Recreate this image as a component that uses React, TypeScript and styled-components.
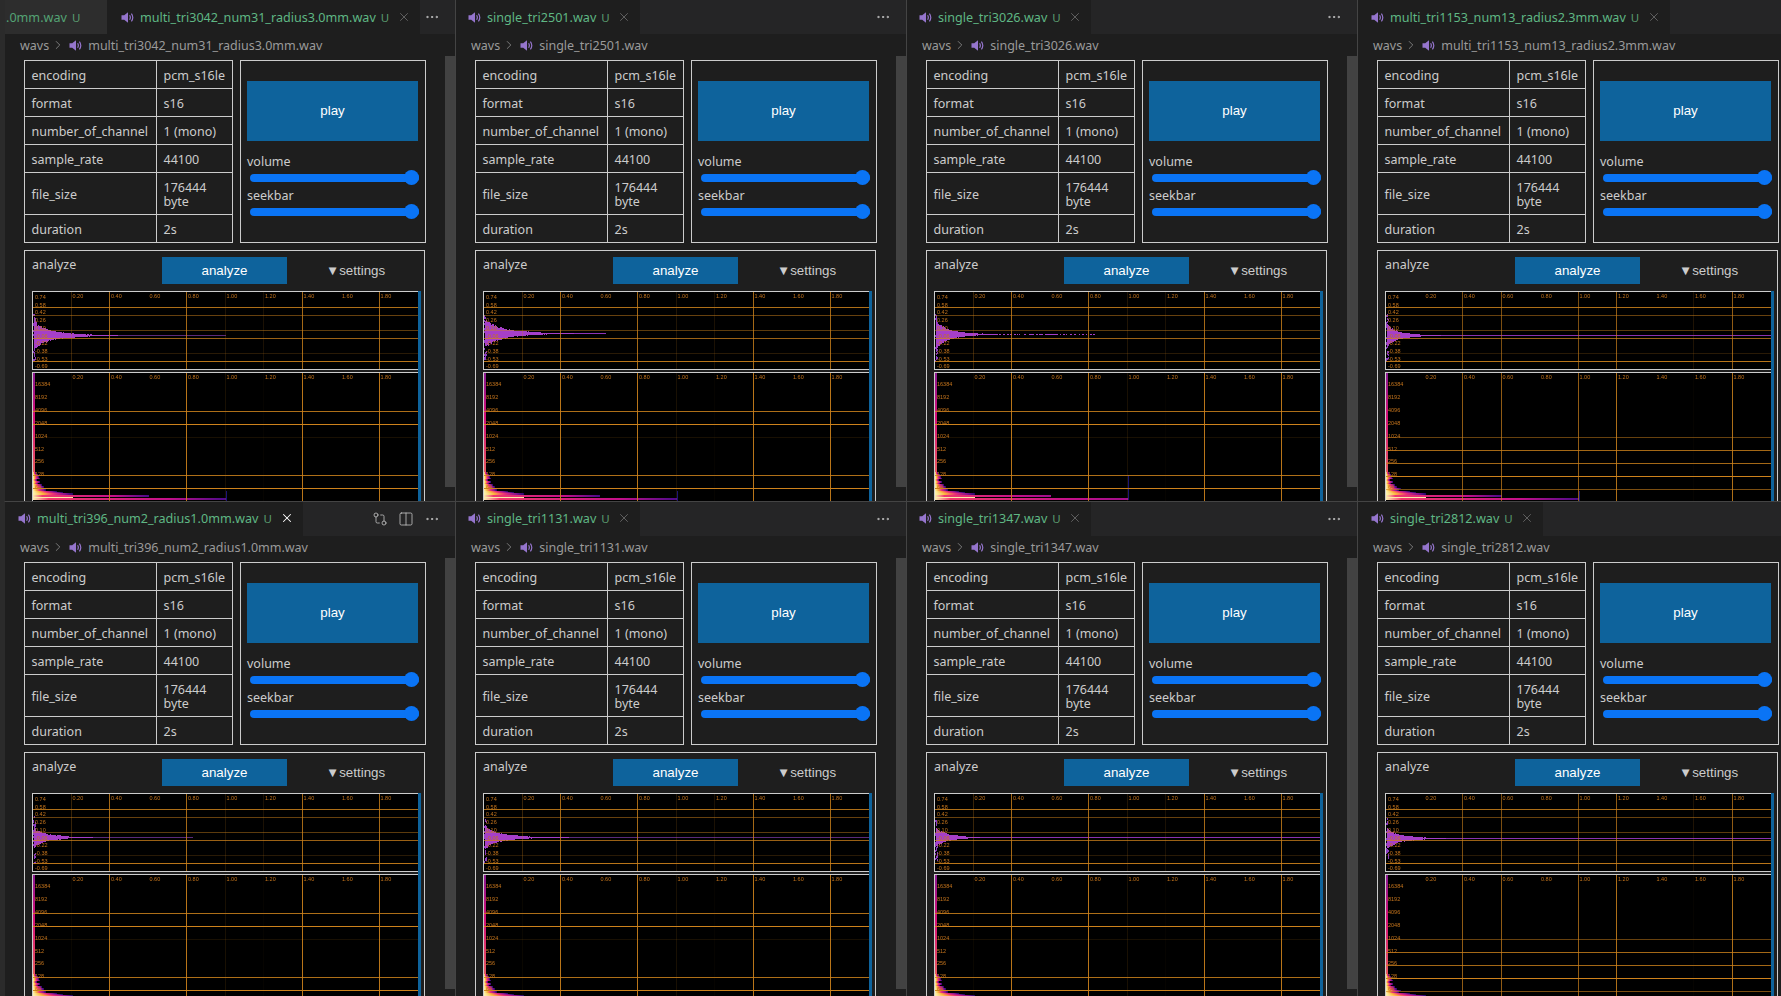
import styled, { createGlobalStyle } from 'styled-components'
import { ChevronRight, Columns2, Ellipsis, GitCompare, X } from 'lucide-react'

const GlobalStyle = createGlobalStyle`
  html, body {
    margin: 0;
    padding: 0;
    background: #1e1e1e;
    overflow: hidden;
  }
`

const UI_FONT = `"Noto Sans", "Open Sans", sans-serif`
const BUTTON_FONT = `"Liberation Sans", Arial, sans-serif`

const Workspace = styled.div`
  display: grid;
  grid-template-columns: 4px 451px 451px 451px 424px;
  grid-template-rows: 501px 495px;
  width: 1781px;
  height: 996px;
  overflow: hidden;
  font-family: ${UI_FONT};
  font-size: 12.5px;
  color: #cccccc;
`

const Gutter = styled.div`
  grid-row: 1 / 3;
  background: #2b2b2b;
`

const Pane = styled.section<{ $first: boolean; $bottom: boolean }>`
  position: relative;
  display: flex;
  flex-direction: column;
  overflow: hidden;
  background: #1e1e1e;
  border-left: 1px solid ${(p) => (p.$first ? '#2b2b2b' : '#444444')};
  border-top: ${(p) => (p.$bottom ? '1px solid #444444' : 'none')};
`

const TabStrip = styled.div`
  flex: none;
  display: flex;
  align-items: stretch;
  height: 34px;
  background: #252526;
  font-size: 12.6px;
  white-space: nowrap;
`

const Tab = styled.div<{ $padLeft: number; $raised: boolean }>`
  flex: none;
  display: flex;
  align-items: center;
  padding: 0 9px ${(p) => (p.$raised ? 2 : 0)}px ${(p) => p.$padLeft}px;
  background: #1e1e1e;
`

const LeadTab = styled.div`
  flex: none;
  display: flex;
  align-items: center;
  width: 101px;
  padding-left: 1px;
  background: #2d2d2d;
`

const TabName = styled.span`
  margin-left: 6px;
  color: #5fb784;
`

const LeadName = styled.span`
  color: #54a374;
`

const Untracked = styled.span`
  margin-left: 5px;
  width: 8px;
  font-size: 11.5px;
  color: #5a9c6f;
`

const CloseButton = styled.span<{ $strong: boolean }>`
  display: flex;
  margin-left: ${(p) => (p.$strong ? 9 : 8)}px;
  color: ${(p) => (p.$strong ? '#ffffff' : '#7b7b7b')};
`

const TabActions = styled.div`
  margin-left: auto;
  display: flex;
  align-items: center;
  gap: 10px;
  padding-right: 15px;
  color: #c5c5c5;
`

const Breadcrumb = styled.div`
  flex: none;
  display: flex;
  align-items: center;
  height: 22px;
  padding-left: 15px;
  color: #9a9a9a;
  white-space: nowrap;
`

const Crumb = styled.span`
  margin-left: 6px;
`

const CrumbChevron = styled.span`
  display: flex;
  margin: 0 4px 0 2px;
  color: #a0a0a0;
`

const Content = styled.div`
  flex: none;
  width: 401px;
  padding: 4px 0 0 19px;
`

const TopRow = styled.div`
  display: flex;
  gap: 7px;
`

const InfoTable = styled.table`
  flex: none;
  width: 209px;
  table-layout: fixed;
  border-collapse: collapse;
  line-height: 14px;

  td {
    padding: 2px 0 0 6.5px;
    border: 1px solid #cccccc;
  }
  td:first-child {
    width: 124.5px;
  }
`

const InfoRow = styled.tr<{ $tall?: boolean }>`
  height: ${(p) => (p.$tall ? 42 : 28)}px;
`

const PlayerBox = styled.div`
  flex: 1;
  display: flex;
  flex-direction: column;
  height: 183px;
  box-sizing: border-box;
  border: 1px solid #cccccc;
  padding: 20px 6px 0;
`

const ActionButton = styled.button<{ $w: number; $h: number }>`
  flex: none;
  display: block;
  width: ${(p) => p.$w}px;
  height: ${(p) => p.$h}px;
  border: none;
  padding: 0 0 1px;
  background: #0e639c;
  color: #ffffff;
  font-family: ${BUTTON_FONT};
  font-size: 13.33px;
`

const SliderLabel = styled.div<{ $top: number }>`
  margin-top: ${(p) => p.$top}px;
  height: 17px;
  line-height: 17px;
`

const Slider = styled.input`
  appearance: none;
  -webkit-appearance: none;
  display: block;
  width: 169px;
  height: 15px;
  margin: 0 0 0 3px;
  padding: 0;
  background: transparent;

  &::-webkit-slider-runnable-track {
    height: 8px;
    border-radius: 4px;
    background: #0a74f5;
  }
  &::-webkit-slider-thumb {
    -webkit-appearance: none;
    width: 15px;
    height: 15px;
    margin-top: -3.5px;
    border-radius: 50%;
    background: #0a74f5;
  }
`

const AnalyzeBox = styled.div`
  margin-top: 7px;
  border: 1px solid #cccccc;
  padding: 6px 0 0 7px;
`

const AnalyzeHeader = styled.div`
  display: flex;
  align-items: flex-start;
  height: 34px;
`

const AnalyzeLabel = styled.div`
  width: 130px;
  height: 15px;
  line-height: 15px;
`

const SettingsToggle = styled.div`
  margin-left: 39px;
  height: 27px;
  line-height: 27px;
  font-family: ${BUTTON_FONT};
  font-size: 13.33px;
  color: #cccccc;
`

const ChartStack = styled.div`
  width: 386px;
  border-right: 3px solid #0e639c;
`

const ChartFrame = styled.div<{ $closed: boolean }>`
  display: block;
  border: 1px solid #cccccc;
  border-right: none;
  border-bottom: ${(p) => (p.$closed ? '1px solid #cccccc' : 'none')};
  margin-bottom: 2px;
  background: #000000;
  line-height: 0;
`

const Chart = styled.svg`
  display: block;
  shape-rendering: crispEdges;

  text {
    font-family: ${BUTTON_FONT};
    font-size: 5.5px;
    fill: #c4741c;
    filter: blur(0.25px);
  }
`

const OverlayScrollbar = styled.div`
  position: absolute;
  top: 56px;
  right: 0;
  width: 10px;
  height: 431px;
  background: #424242;
`

const AudioGlyph = () => (
  <svg width="13" height="13" viewBox="0 0 13 13" fill="none">
    <path d="M0.5 4.2h2.7L7 1.2v10.6L3.2 8.8H0.5z" fill="#9575cd" />
    <path d="M8.6 4.2c.9 1.4.9 3.2 0 4.6M10.4 2.6c1.7 2.4 1.7 5.4 0 7.8" stroke="#9575cd" strokeWidth="1.2" />
  </svg>
)

// ---- chart data ----

const rng = (seed: number) => () => {
  seed = (seed + 0x6d2b79f5) | 0
  let t = Math.imul(seed ^ (seed >>> 15), 1 | seed)
  t = (t + Math.imul(t ^ (t >>> 7), 61 | t)) ^ t
  return ((t ^ (t >>> 14)) >>> 0) / 4294967296
}

const LINE = 'rgb(205,130,28)'
const TIME_LABELS = ['0.20', '0.40', '0.60', '0.80', '1.00', '1.20', '1.40', '1.60', '1.80']
const AMP_LABELS = ['0.74', '0.58', '0.42', '0.26', '0.10', '-0.06', '-0.22', '-0.38', '-0.53', '-0.69']
const FREQ_LABELS = ['16384', '8192', '4096', '2048', '1024', '512', '256', '128', '64']

const WAVE_H: [number, number][] = [[15, 0.85], [23, 0.5], [38, 0.45], [46, 0.75], [61, 0.2], [69, 0.9]]
const SPEC_H: [number, number][] = [[38, 0.85], [51, 1], [64, 0.12], [102, 0.85], [115, 1]]
const SPEC_H_ALT: [number, number][] = [[64, 0.5], [77, 0.8], [90, 0.8], [103, 1], [116, 0.6]]

const WAVE_V = [0.28, 0.8, 0, 0.8, 0.16, 0.13, 0.8, 0, 0.8]
const SPEC_V = [0.05, 0.9, 0, 0.9, 0.12, 0.03, 0.9, 0, 0.9]
const WAVE_V_ALT = [0, 0.6, 0.6, 0, 0.6, 0.7, 0, 0.15, 0.7]
const SPEC_V_ALT = [0, 0.7, 0.7, 0, 0.7, 0.85, 0, 0.03, 0.85]

type Signal = {
  seed: number
  cy: number
  amp: number
  tau: number
  burst: number
  tailEnd: number
  tailColor: string
  sparse?: number
  blip?: boolean
  thickTail?: boolean
}

const GridLines = ({ w, h, vertical, horizontal }: { w: number; h: number; vertical: number[]; horizontal: [number, number][] }) => (
  <g>
    {vertical.map((o, i) =>
      o > 0 ? <rect key={i} x={Math.round(38.5 * (i + 1)) - 1} y={0} width={1} height={h} fill={LINE} opacity={o} /> : null
    )}
    {horizontal.map(([y, o]) => (
      <rect key={y} x={0} y={y} width={w} height={1} fill={LINE} opacity={o} />
    ))}
  </g>
)

const WaveChart = ({ signal, alt }: { signal: Signal; alt: boolean }) => {
  const r = rng(signal.seed)
  const bars = []
  for (let x = 1; x < signal.burst; x++) {
    const a = signal.amp * Math.exp(-x / signal.tau) + (x < signal.burst * 0.5 ? 0.9 : 0.3)
    const up = Math.round(a * (0.75 + r() * 0.25))
    const down = Math.round(a * (0.75 + r() * 0.25))
    bars.push(<rect key={x} x={x} y={signal.cy - up} width={1} height={up + down + 1} fill="#a63fc8" />)
  }
  const specks = []
  for (let i = 0; i < 34; i++) {
    const y = 22 + Math.round(r() * 46)
    specks.push(<rect key={i} x={Math.round(r() * 2)} y={y} width={1} height={2} fill="#8a3cc0" />)
  }
  const sparse = []
  if (signal.sparse) {
    for (let x = signal.burst; x < signal.sparse; x += 2 + Math.round(r() * 3)) {
      sparse.push(<rect key={x} x={x} y={signal.cy} width={1 + Math.round(r() * 2)} height={1} fill="#a63fc8" />)
    }
  }
  return (
    <Chart width={385} height={77} viewBox="0 0 385 77">
      {signal.tailEnd > 0 && <rect x={signal.burst} y={signal.cy} width={signal.tailEnd - signal.burst} height={1} fill={signal.tailColor} />}
      {sparse}
      {specks}
      {bars}
      <GridLines w={385} h={77} vertical={alt ? WAVE_V_ALT : WAVE_V} horizontal={WAVE_H} />
      {TIME_LABELS.map((t, i) => (
        <text key={t} x={38.5 * (i + 1) + 1} y={6}>{t}</text>
      ))}
      {AMP_LABELS.map((t, i) => (
        <text key={t} x={2} y={7 + i * 7.7}>{t}</text>
      ))}
    </Chart>
  )
}

const BLOB_ROWS: [number, number, number][] = [
  [99, 3, 2], [101, 5, 2], [103, 6, 2], [105, 7, 1], [106, 4, 2], [108, 7, 2], [110, 5, 1], [111, 9, 2],
  [113, 11, 2], [115, 15, 1], [116, 13, 2], [118, 24, 1], [119, 30, 1], [120, 40, 2],
]

const SpecChart = ({ signal, alt, index }: { signal: Signal; alt: boolean; index: number }) => {
  const blobId = `blob-${index}`
  const tailId = `tail-${index}`
  return (
    <Chart width={385} height={132} viewBox="0 0 385 132">
      <defs>
        <linearGradient id={blobId}>
          <stop offset="0" stopColor="#fdf6b2" />
          <stop offset="0.25" stopColor="#fbb53c" />
          <stop offset="0.5" stopColor="#ee2f78" />
          <stop offset="0.8" stopColor="#8a128f" />
          <stop offset="1" stopColor="#1a0a6a" />
        </linearGradient>
        <linearGradient id={tailId}>
          <stop offset="0" stopColor="#fdf0b0" />
          <stop offset="0.08" stopColor="#f0386c" />
          <stop offset="0.7" stopColor="#c4108a" />
          <stop offset="1" stopColor={signal.thickTail ? '#a00f8c' : '#4a0a8a'} />
        </linearGradient>
        <linearGradient id={`${tailId}-strip`} x1="0" y1="0" x2="0" y2="1">
          <stop offset="0" stopColor="#8a1a90" />
          <stop offset="0.45" stopColor="#d80f76" />
          <stop offset="1" stopColor="#e85a60" />
        </linearGradient>
      </defs>
      <rect x={0} y={0} width={2} height={99} fill={`url(#${tailId}-strip)`} />
      {BLOB_ROWS.map(([y, w, h]) => (
        <rect key={y} x={0} y={y} width={w} height={h} fill={`url(#${blobId})`} />
      ))}
      <rect x={0} y={122} width={116} height={2} fill={`url(#${tailId})`} />
      <rect x={0} y={124} width={40} height={1} fill="#fdeaa8" />
      <rect x={0} y={125} width={194} height={2} fill={`url(#${tailId})`} />
      {signal.blip && <rect x={193} y={signal.thickTail ? 102 : 118} width={1} height={25} fill="#1c1478" />}
      <GridLines w={385} h={132} vertical={alt ? SPEC_V_ALT : SPEC_V} horizontal={alt ? SPEC_H_ALT : SPEC_H} />
      {TIME_LABELS.map((t, i) => (
        <text key={t} x={38.5 * (i + 1) + 1} y={6}>{t}</text>
      ))}
      {FREQ_LABELS.map((t, i) => (
        <text key={t} x={2} y={13 + i * 12.9}>{t}</text>
      ))}
    </Chart>
  )
}

type PaneData = {
  name: string
  padLeft: number
  lead?: string
  focused?: boolean
  last?: boolean
  signal: Signal
}

const DIM = '#5b2a78'
const BRIGHT = '#8a32ae'

const PANES: PaneData[] = [
  { name: 'multi_tri3042_num31_radius3.0mm.wav', padLeft: 14, lead: '.0mm.wav', signal: { seed: 11, cy: 43, amp: 15, tau: 14, burst: 85, tailEnd: 193, tailColor: DIM, blip: true } },
  { name: 'single_tri2501.wav', padLeft: 12, signal: { seed: 23, cy: 41, amp: 15, tau: 15, burst: 90, tailEnd: 122, tailColor: '#8f34b6', blip: true } },
  { name: 'single_tri3026.wav', padLeft: 12, signal: { seed: 37, cy: 42, amp: 15, tau: 11, burst: 60, sparse: 160, tailEnd: 0, tailColor: DIM, blip: true, thickTail: true } },
  { name: 'multi_tri1153_num13_radius2.3mm.wav', padLeft: 13, last: true, signal: { seed: 41, cy: 43, amp: 12, tau: 9, burst: 55, tailEnd: 385, tailColor: BRIGHT, blip: true } },
  { name: 'multi_tri396_num2_radius1.0mm.wav', padLeft: 13, focused: true, signal: { seed: 53, cy: 43, amp: 10, tau: 10, burst: 60, tailEnd: 160, tailColor: DIM } },
  { name: 'single_tri1131.wav', padLeft: 12, signal: { seed: 67, cy: 43, amp: 12, tau: 12, burst: 85, tailEnd: 385, tailColor: DIM } },
  { name: 'single_tri1347.wav', padLeft: 12, signal: { seed: 71, cy: 43, amp: 10, tau: 9, burst: 45, tailEnd: 385, tailColor: BRIGHT } },
  { name: 'single_tri2812.wav', padLeft: 13, last: true, signal: { seed: 83, cy: 44, amp: 11, tau: 10, burst: 60, tailEnd: 385, tailColor: BRIGHT } },
]

const EditorPane = ({ data, index }: { data: PaneData; index: number }) => (
  <Pane $first={index % 4 === 0} $bottom={index >= 4}>
    <TabStrip>
      {data.lead && (
        <LeadTab>
          <LeadName>{data.lead}</LeadName>
          <Untracked>U</Untracked>
        </LeadTab>
      )}
      <Tab $padLeft={data.padLeft} $raised={index >= 4}>
        <AudioGlyph />
        <TabName>{data.name}</TabName>
        <Untracked>U</Untracked>
        <CloseButton $strong={!!data.focused}>
          <X size={14} strokeWidth={data.focused ? 1.8 : 1.2} />
        </CloseButton>
      </Tab>
      {!data.last && (
        <TabActions>
          {data.focused && <GitCompare size={16} strokeWidth={1.2} />}
          {data.focused && <Columns2 size={16} strokeWidth={1.2} />}
          <Ellipsis size={16} strokeWidth={1.4} />
        </TabActions>
      )}
    </TabStrip>
    <Breadcrumb>
      wavs
      <CrumbChevron>
        <ChevronRight size={14} strokeWidth={1.2} />
      </CrumbChevron>
      <AudioGlyph />
      <Crumb>{data.name}</Crumb>
    </Breadcrumb>
    <Content>
      <TopRow>
        <InfoTable>
          <tbody>
            <InfoRow><td>encoding</td><td>pcm_s16le</td></InfoRow>
            <InfoRow><td>format</td><td>s16</td></InfoRow>
            <InfoRow><td>number_of_channel</td><td>1 (mono)</td></InfoRow>
            <InfoRow><td>sample_rate</td><td>44100</td></InfoRow>
            <InfoRow $tall><td>file_size</td><td>176444 byte</td></InfoRow>
            <InfoRow><td>duration</td><td>2s</td></InfoRow>
          </tbody>
        </InfoTable>
        <PlayerBox>
          <ActionButton $w={171} $h={60}>play</ActionButton>
          <SliderLabel $top={12}>volume</SliderLabel>
          <Slider type="range" min={0} max={100} defaultValue={100} />
          <SliderLabel $top={2}>seekbar</SliderLabel>
          <Slider type="range" min={0} max={100} defaultValue={100} />
        </PlayerBox>
      </TopRow>
      <AnalyzeBox>
        <AnalyzeHeader>
          <AnalyzeLabel>analyze</AnalyzeLabel>
          <ActionButton $w={125} $h={27}>analyze</ActionButton>
          <SettingsToggle>▼settings</SettingsToggle>
        </AnalyzeHeader>
        <ChartStack>
          <ChartFrame $closed>
            <WaveChart signal={data.signal} alt={!!data.last} />
          </ChartFrame>
          <ChartFrame $closed={false}>
            <SpecChart signal={data.signal} alt={!!data.last} index={index} />
          </ChartFrame>
        </ChartStack>
      </AnalyzeBox>
    </Content>
    {!data.last && <OverlayScrollbar />}
  </Pane>
)

const App = () => (
  <>
    <GlobalStyle />
    <Workspace>
      <Gutter />
      {PANES.map((p, i) => <EditorPane key={p.name} data={p} index={i} />)}
    </Workspace>
  </>
)

export default App
